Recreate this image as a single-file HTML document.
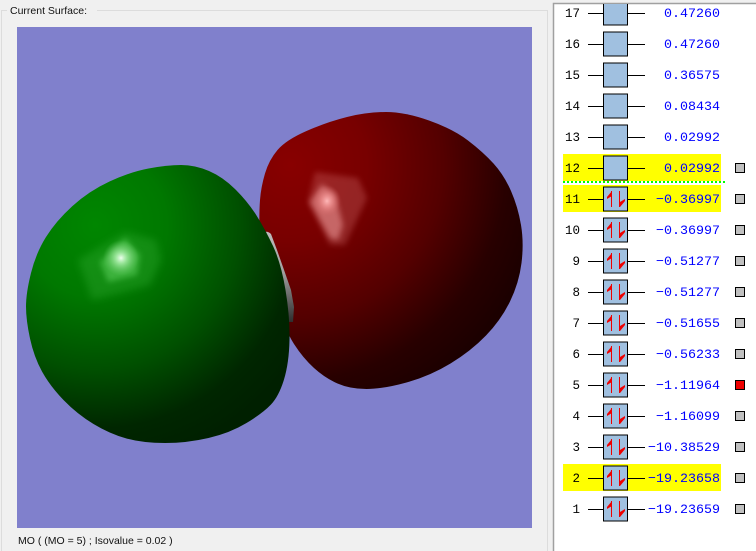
<!DOCTYPE html>
<html>
<head>
<meta charset="utf-8">
<style>
html,body{margin:0;padding:0;background:#f0f0f0;}
svg{display:block;}
.n{font-family:"Liberation Mono",monospace;font-size:12.5px;fill:#000;text-anchor:end;}
.e{font-family:"Liberation Mono",monospace;font-size:13.33px;fill:#0000ff;text-anchor:end;}
.u{font-family:"Liberation Sans",sans-serif;font-size:10.5px;fill:#111;}
</style>
</head>
<body>
<svg width="756" height="551" viewBox="0 0 756 551" xmlns="http://www.w3.org/2000/svg">
<defs>
<radialGradient id="gg" gradientUnits="userSpaceOnUse" cx="95" cy="225" r="240">
<stop offset="0" stop-color="#008600"/>
<stop offset=".3" stop-color="#007800"/>
<stop offset=".6" stop-color="#005000"/>
<stop offset=".85" stop-color="#002600"/>
<stop offset="1" stop-color="#002000"/>
</radialGradient>
<radialGradient id="rg" gradientUnits="userSpaceOnUse" cx="290" cy="165" r="255">
<stop offset="0" stop-color="#880000"/>
<stop offset=".3" stop-color="#780000"/>
<stop offset=".6" stop-color="#540000"/>
<stop offset=".85" stop-color="#280000"/>
<stop offset="1" stop-color="#1c0000"/>
</radialGradient>
<linearGradient id="sl" x1="0" y1="0" x2="0" y2="1">
<stop offset="0" stop-color="#bcbcbc"/>
<stop offset=".45" stop-color="#a0a0a0"/>
<stop offset="1" stop-color="#2e2e2e"/>
</linearGradient>
<radialGradient id="gc"><stop offset="0" stop-color="#eeffee"/><stop offset=".3" stop-color="#aaeeaa" stop-opacity=".85"/><stop offset="1" stop-color="#66cc66" stop-opacity="0"/></radialGradient>
<radialGradient id="rc"><stop offset="0" stop-color="#ffb8b8"/><stop offset=".4" stop-color="#f09090" stop-opacity=".7"/><stop offset="1" stop-color="#d06060" stop-opacity="0"/></radialGradient>
<filter id="b3" x="-40%" y="-40%" width="180%" height="180%"><feGaussianBlur stdDeviation="3"/></filter>
<filter id="b5" x="-40%" y="-40%" width="180%" height="180%"><feGaussianBlur stdDeviation="4"/></filter>
<g id="box"><path d="M588 0.5H603M628 0.5H645" stroke="#000" stroke-width="1"/><rect x="603.5" y="-12" width="24" height="24" fill="#a0c0e0" stroke="#000" stroke-width="1"/></g>
<g id="ar"><path d="M611.5 -8V8M619.5 -8V8" stroke="#ee0000" stroke-width="1"/><path d="M612 -8L607 -2L607 0L612 -3ZM620 8L625 2L625 0L620 3Z" fill="#ee0000"/></g>
<rect id="cb" x="735.5" y="-4.5" width="9" height="9" fill="#c0c0c0" stroke="#000" stroke-width="1"/>
</defs>

<rect width="756" height="551" fill="#f0f0f0"/>
<path d="M1.5 551V10.5H7M97 10.5H547.5V551" fill="none" stroke="#dcdcdc" stroke-width="1"/>
<text class="u" x="10" y="14">Current Surface:</text>

<rect x="17" y="27" width="515" height="501" fill="#8080cc"/>

<path fill="url(#rg)" d="M347 117Q367 112 386 112Q405 112 429 120.5Q453 129 468 140.5Q483 152 493.5 163.5Q504 175 511 191Q518 207 521 225Q524 243 521.5 263Q519 283 510 301.5Q501 320 486 335.5Q471 351 450.5 363.5Q430 376 406.5 382.5Q383 389 366.5 389Q350 389 337.5 383.5Q325 378 314 368Q303 358 294 344Q285 330 272 295Q260 260 259.5 236.5Q259 213 260 200Q261 187 265 173.5Q269 160 277.5 150Q286 140 306.5 131Q327 122 347 117Z"/>
<polygon fill="#e08080" opacity=".28" filter="url(#b3)" points="308,202 315,172 358,178 367,198 345,245 330,245"/>
<polygon fill="#f8a8a8" opacity=".5" filter="url(#b3)" points="310,202 322,184 335,195 343,225 338,240 330,238"/>
<ellipse cx="327" cy="201" rx="14" ry="16" fill="url(#rc)"/>

<path fill="url(#sl)" d="M265 232Q268 231 271 234L277 250L283 267L291 290L294 307L293 322L289 322L280 270Z"/>

<path fill="url(#gg)" d="M148.5 168.5Q167 165 181 165Q195 165 209 171Q223 177 235.5 189.5Q248 202 256.5 215.5Q265 229 273 246Q281 263 285.5 290Q290 317 289.5 340Q289 363 284 379.5Q279 396 271 404.5Q263 413 246.5 423Q230 433 208.5 438Q187 443 165 443Q143 443 126.5 438.5Q110 434 93.5 424Q77 414 63.5 400Q50 386 42 371.5Q34 357 30 338.5Q26 320 26 306.5Q26 293 31 273Q36 253 46 237Q56 221 72.5 206Q89 191 109.5 181.5Q130 172 148.5 168.5Z"/>
<polygon fill="#48c048" opacity=".26" filter="url(#b5)" points="78,260 125,232 156,240 161,260 150,285 92,300"/>
<polygon fill="#70e070" opacity=".45" filter="url(#b3)" points="100,262 125,238 140,255 137,275 108,282"/>
<ellipse cx="121" cy="258" rx="18" ry="18" fill="url(#gc)"/>

<text class="u" x="18" y="544">MO ( (MO = 5) ; Isovalue = 0.02 )</text>

<rect x="553.5" y="3.5" width="210" height="560" fill="#ffffff" stroke="#a0a0a0" stroke-width="1.5"/>

<rect x="563" y="154" width="158" height="27" fill="#ffff00"/>
<rect x="563" y="185" width="158" height="27" fill="#ffff00"/>
<rect x="563" y="464" width="158" height="27" fill="#ffff00"/>
<line x1="563" y1="182" x2="725" y2="182" stroke="#00ff00" stroke-width="2" stroke-dasharray="2 2"/>

<svg x="553" y="4" width="203" height="547" viewBox="553 4 203 547">
<use href="#box" y="13"/>
<use href="#box" y="44"/>
<use href="#box" y="75"/>
<use href="#box" y="106"/>
<use href="#box" y="137"/>
</svg>
<use href="#box" y="168"/>
<use href="#box" y="199"/><use href="#ar" y="199"/><use href="#cb" y="199"/>
<use href="#box" y="230"/><use href="#ar" y="230"/><use href="#cb" y="230"/>
<use href="#box" y="261"/><use href="#ar" y="261"/><use href="#cb" y="261"/>
<use href="#box" y="292"/><use href="#ar" y="292"/><use href="#cb" y="292"/>
<use href="#box" y="323"/><use href="#ar" y="323"/><use href="#cb" y="323"/>
<use href="#box" y="354"/><use href="#ar" y="354"/><use href="#cb" y="354"/>
<use href="#box" y="385"/><use href="#ar" y="385"/>
<rect x="735.5" y="380.5" width="9" height="9" fill="#ee0000" stroke="#000" stroke-width="1"/>
<use href="#box" y="416"/><use href="#ar" y="416"/><use href="#cb" y="416"/>
<use href="#box" y="447"/><use href="#ar" y="447"/><use href="#cb" y="447"/>
<use href="#box" y="478"/><use href="#ar" y="478"/><use href="#cb" y="478"/>
<use href="#box" y="509"/><use href="#ar" y="509"/><use href="#cb" y="509"/>
<use href="#cb" y="168"/>

<text class="n" x="580" y="17">17</text><text class="e" x="720" y="17">0.47260</text>
<text class="n" x="580" y="48">16</text><text class="e" x="720" y="48">0.47260</text>
<text class="n" x="580" y="79">15</text><text class="e" x="720" y="79">0.36575</text>
<text class="n" x="580" y="110">14</text><text class="e" x="720" y="110">0.08434</text>
<text class="n" x="580" y="141">13</text><text class="e" x="720" y="141">0.02992</text>
<text class="n" x="580" y="172">12</text><text class="e" x="720" y="172">0.02992</text>
<text class="n" x="580" y="203">11</text><text class="e" x="720" y="203">−0.36997</text>
<text class="n" x="580" y="234">10</text><text class="e" x="720" y="234">−0.36997</text>
<text class="n" x="580" y="265">9</text><text class="e" x="720" y="265">−0.51277</text>
<text class="n" x="580" y="296">8</text><text class="e" x="720" y="296">−0.51277</text>
<text class="n" x="580" y="327">7</text><text class="e" x="720" y="327">−0.51655</text>
<text class="n" x="580" y="358">6</text><text class="e" x="720" y="358">−0.56233</text>
<text class="n" x="580" y="389">5</text><text class="e" x="720" y="389">−1.11964</text>
<text class="n" x="580" y="420">4</text><text class="e" x="720" y="420">−1.16099</text>
<text class="n" x="580" y="451">3</text><text class="e" x="720" y="451">−10.38529</text>
<text class="n" x="580" y="482">2</text><text class="e" x="720" y="482">−19.23658</text>
<text class="n" x="580" y="513">1</text><text class="e" x="720" y="513">−19.23659</text>
</svg>
</body>
</html>
